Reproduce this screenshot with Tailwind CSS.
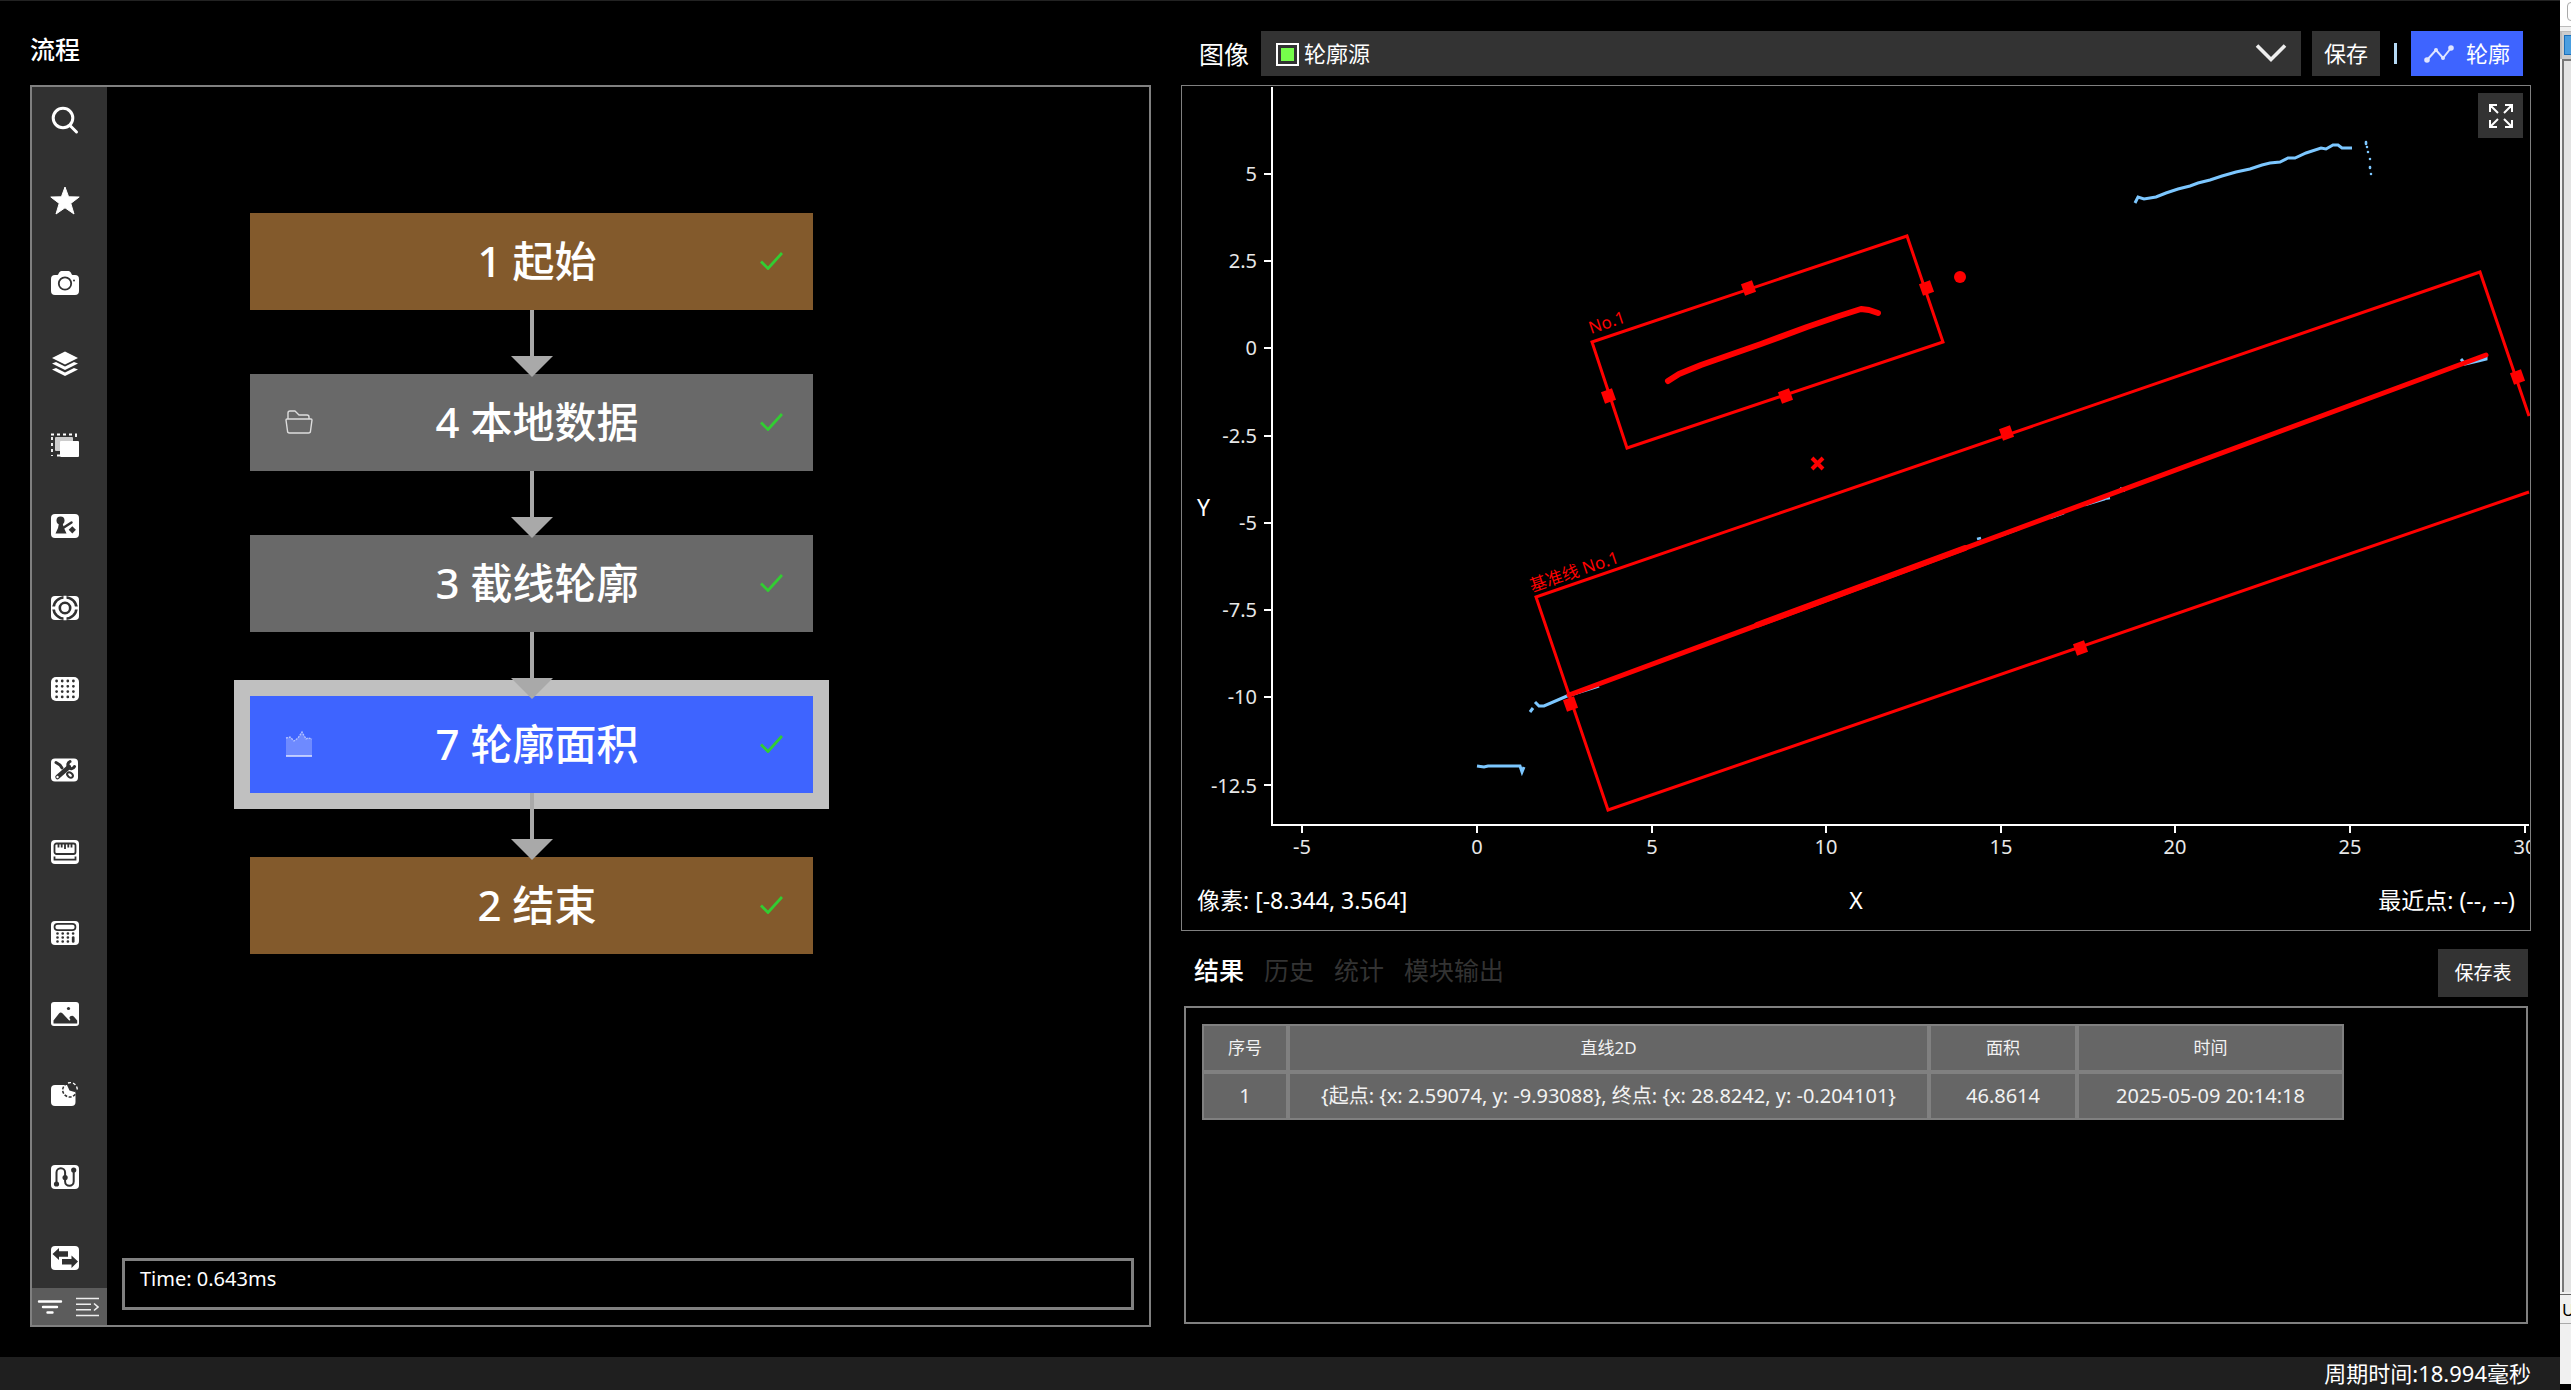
<!DOCTYPE html>
<html lang="zh-CN">
<head>
    <meta charset="UTF-8">
    <meta name="viewport" content="width=device-width, initial-scale=1.0">
    <title>流程</title>
    <script src="https://cdn.jsdelivr.net/npm/@tailwindcss/browser@4"></script>
    <style>
        body {
            font-family: 'Noto Sans', 'Noto Sans CJK SC', sans-serif;
        }
    </style>
</head>
<body class="flex min-h-screen overflow-x-hidden bg-black text-white">

    <div class="flex min-w-0 flex-1 flex-col border-t border-[#222]">
        <main class="grid flex-1 grid-cols-[1121fr_1350fr] gap-[30px] pt-[30px] pr-[29px] pl-[30px]">

            <!-- Flow -->
            <section class="flex flex-col pb-[30px]">
                <h1 class="mb-[18px] text-[25px] leading-9 font-medium">流程</h1>
                <div class="flex flex-1 border-2 border-[#808080]">

                    <!-- Tool categories -->
                    <nav class="flex w-[75px] flex-col bg-[#313131]" aria-label="工具">
                        <div class="flex flex-1 flex-col justify-between pt-[18px] pb-[15px] pl-[18px]">
                            <button class="size-[30px]" aria-label="搜索">
                                <svg viewBox="0 0 30 30" fill="none" stroke="#fff" stroke-width="3" stroke-linecap="round"><circle cx="13" cy="13" r="9.8"/><path d="M20 20.500l6.500 6.500"/></svg>
                            </button>
                            <button class="size-[30px]" aria-label="收藏">
                                <svg viewBox="0 0 30 30" fill="#fff" stroke="#fff" stroke-linejoin="round"><path d="M15 1l3.600 9.800 10.600.2-8.400 6.400 3.200 10.600-9-6.200-9 6.200 3.200-10.600L.8 11l10.600-.2z"/></svg>
                            </button>
                            <button class="size-[30px]" aria-label="相机">
                                <svg viewBox="0 0 30 30"><path fill="#fff" d="M5 7h2.500c1 0 1.500-4 4-4h7c2.500 0 3 4 4 4H25a4 4 0 0 1 4 4v12a4 4 0 0 1-4 4H5a4 4 0 0 1-4-4V11a4 4 0 0 1 4-4z"/><circle cx="15" cy="15.500" r="6.200" fill="none" stroke="#313131" stroke-width="1.800"/><circle cx="24" cy="12.500" r="1" fill="#313131"/></svg>
                            </button>
                            <button class="size-[30px]" aria-label="图层">
                                <svg viewBox="0 0 30 30" fill="#fff"><path d="M15 2.500l13 6.500-13 6.500L2 9z"/><path d="M2 14.500l4-1.500 9 4.500 9-4.500 4 1.500-13 6.500z"/><path d="M2 20.500l4-1.500 9 4.500 9-4.500 4 1.500-13 6.500z"/></svg>
                            </button>
                            <button class="size-[30px]" aria-label="区域">
                                <svg viewBox="0 0 30 30"><path fill="none" stroke="#fff" stroke-width="1.800" stroke-dasharray="3 3" d="M1 4.500h26M2 7v19M7 25.500h5M26 4v6"/><rect x="5" y="7" width="18" height="14" rx="1" fill="#ccc"/><rect x="10" y="11" width="19" height="16" rx="1" fill="#fff"/></svg>
                            </button>
                            <button class="size-[30px]" aria-label="定位">
                                <svg viewBox="0 0 30 30"><rect x="1" y="3" width="28" height="24" rx="4" fill="#fff"/><g fill="#313131"><circle cx="10.500" cy="9.500" r="4"/><path d="M9 12h3.500l1.500 5 2.500 5.500H5.500L8 17z"/><path d="M22.300 15.200l3.600 3.600-3.600 3.600-3.600-3.600z"/></g><path d="M13 17l8.500-5.500" stroke="#313131" stroke-width="2.500" stroke-linecap="round"/></svg>
                            </button>
                            <button class="size-[30px]" aria-label="目标">
                                <svg viewBox="0 0 30 30"><rect x="1" y="3" width="28" height="24" rx="4" fill="#fff"/><ellipse cx="15" cy="15" rx="11.500" ry="10.800" fill="none" stroke="#313131" stroke-width="2.600"/><path d="M15 2.800v6M15 21.200v6M1.500 15h7M21.500 15h7" stroke="#fff" stroke-width="3"/><circle cx="15" cy="15" r="5.200" fill="none" stroke="#313131" stroke-width="2.600"/></svg>
                            </button>
                            <button class="size-[30px]" aria-label="点阵">
                                <svg viewBox="0 0 30 30"><rect x="1" y="3" width="28" height="24" rx="5" fill="#fff"/><path fill="none" stroke="#313131" stroke-width="2.800" stroke-linecap="round" stroke-dasharray="0 5.600" d="M6.600 7h18M6.600 12.300h18M6.600 17.600h18M6.600 22.900h18"/></svg>
                            </button>
                            <button class="size-[30px]" aria-label="工具箱">
                                <svg viewBox="0 0 30 30"><rect x="1" y="3.500" width="27" height="23" rx="4" fill="#fff"/><g fill="none" stroke="#313131" stroke-linecap="round"><path d="M7.500 22L19 12" stroke-width="4.500"/><path d="M20 6.500c-3 1.500-3 6 .5 7 1.500.4 3 0 4-2" stroke-width="3"/><path d="M6 7.500l4 2.500 2 3" stroke-width="3"/><ellipse cx="20" cy="20" rx="3.200" ry="2.200" transform="rotate(40 20 20)" stroke-width="2"/></g><circle cx="7.500" cy="22" r="1.200" fill="#fff"/></svg>
                            </button>
                            <button class="size-[30px]" aria-label="测量">
                                <svg viewBox="0 0 30 30"><rect x="1" y="3" width="28" height="24" rx="4" fill="#fff"/><g fill="none" stroke="#313131" stroke-width="1.800"><rect x="4.500" y="6.500" width="21" height="10.500" rx="2"/><path d="M8.500 7v3.500M11.700 7v3.500M15 7v5M18.300 7v3.500M21.500 7v3.500"/><path d="M4.500 19.500v3.200h21v-3.200"/></g></svg>
                            </button>
                            <button class="size-[30px]" aria-label="计算">
                                <svg viewBox="0 0 30 30"><rect x="1" y="3" width="28" height="24" rx="4" fill="#fff"/><g fill="none" stroke="#313131"><rect x="4.500" y="5.800" width="21" height="6.400" rx="3.200" stroke-width="1.700"/><path d="M7.500 15.500h18M7.500 19.500h12M7.500 23.500h12" stroke-width="2.700" stroke-linecap="round" stroke-dasharray="0 5.200"/><path d="M23.200 19.500v4" stroke-width="2.700" stroke-linecap="round"/></g></svg>
                            </button>
                            <button class="size-[30px]" aria-label="图像">
                                <svg viewBox="0 0 30 30"><rect x="1" y="3" width="28" height="24" rx="3" fill="#fff"/><path fill="#313131" d="M3.500 24.500v-3l5.500-7c1-1.300 2.300-1.300 3.400-.2l6.600 7c1 .6 1.800-.2 1-1.300l-.6-1c.3-2 3-3 4.600-1.300l3.200 3.800v3z"/><circle cx="18.500" cy="9.500" r="1.600" fill="#313131"/></svg>
                            </button>
                            <button class="size-[30px]" aria-label="统计">
                                <svg viewBox="0 0 30 30"><rect x="1" y="5" width="24.500" height="21" rx="4" fill="#fff"/><path fill="#313131" d="M19.500 10.500L16.500 4 20 2.500h7.500V11l-3 1z"/><circle cx="19.700" cy="10" r="7" fill="none" stroke="#313131" stroke-width="1.500" stroke-dasharray="3 1.500"/><path fill="none" stroke="#fff" stroke-width="1.400" stroke-dasharray="3 2" d="M18 3a7 7 0 0 1 9 8.500"/></svg>
                            </button>
                            <button class="size-[30px]" aria-label="路径">
                                <svg viewBox="0 0 30 30"><rect x="1" y="3" width="28" height="24" rx="4" fill="#fff"/><path fill="none" stroke="#313131" stroke-width="2" d="M6.500 22V10.500a4.300 4.300 0 0 1 8.600 0v9a4.300 4.300 0 0 0 8.600 0V8"/><g fill="#313131"><circle cx="6.500" cy="22" r="2.600"/><circle cx="15.100" cy="15.500" r="2.600"/><circle cx="23.700" cy="8" r="2.600"/></g></svg>
                            </button>
                            <button class="size-[30px]" aria-label="转换">
                                <svg viewBox="0 0 30 30"><rect x="1" y="3" width="28" height="24" rx="4" fill="#fff"/><path fill="#313131" d="M2.500 11L9 5v3.200h9v5.600H9V17zM28 18.500L21.500 25v-3.500H12V16h9.500v-3.500z"/></svg>
                            </button>
                        </div>
                        <div class="flex h-[37px] items-center justify-between bg-[#5c5c5c] pr-2 pl-[5px]">
                            <button aria-label="筛选"><svg class="h-[18px] w-[26px]" viewBox="0 0 26 18" stroke="#fff" stroke-width="2.400" stroke-linecap="round"><path d="M2 3.500h22M6 9h14M10.500 14.500h5"/></svg></button>
                            <button aria-label="展开"><svg class="h-5 w-6" viewBox="0 0 24 20" fill="none" stroke="#eee" stroke-width="1.600"><path d="M1 1.500h23M1 7.300h15M1 12.800h15M1 18.500h23M19 6.500l4 3.500-4 3.500"/></svg></button>
                        </div>
                    </nav>

                    <!-- Flow canvas -->
                    <div class="flex min-w-0 flex-1 flex-col">
                        <ol class="flex w-[706px] flex-col pt-[126px] pl-[143px]">
                            <li class="flex h-[97px] items-center bg-[#835a2c] pr-[30px] pb-0.5 pl-[34px]">
                                <span class="w-[30px]"></span>
                                <span class="flex-1 text-center text-[42px] leading-[60px] font-medium">1 起始</span>
                                <svg class="h-[18px] w-[23px]" viewBox="0 0 23 18" fill="none" stroke="#32cd32" stroke-width="2.800"><path d="M1 9.500l7 7L22 1"/></svg>
                            </li>
                            <li class="relative z-10 flex h-16 justify-center" aria-hidden="true">
                                <svg class="h-[67px] w-[42px] shrink-0" viewBox="0 0 42 67" fill="#a9a9a9"><path d="M19 0h4v47h-4zM0 46h42L21 67z"/></svg>
                            </li>
                            <li class="flex h-[97px] items-center bg-[#696969] pr-[30px] pb-0.5 pl-[34px]">
                                <svg class="h-[30px] w-[30px]" viewBox="0 0 30 30" fill="none" stroke="#ddd" stroke-width="1.400" stroke-linejoin="round"><path d="M4 12V6a2 2 0 0 1 2-2h5l4 4h8a2 2 0 0 1 2 2v2"/><path d="M3 12h24a1 1 0 0 1 1 1l-1.500 11a2 2 0 0 1-2 2h-19a2 2 0 0 1-2-2L2 13a1 1 0 0 1 1-1z"/></svg>
                                <span class="flex-1 text-center text-[42px] leading-[60px] font-medium">4 本地数据</span>
                                <svg class="h-[18px] w-[23px]" viewBox="0 0 23 18" fill="none" stroke="#32cd32" stroke-width="2.800"><path d="M1 9.500l7 7L22 1"/></svg>
                            </li>
                            <li class="relative z-10 flex h-16 justify-center" aria-hidden="true">
                                <svg class="h-[67px] w-[42px] shrink-0" viewBox="0 0 42 67" fill="#a9a9a9"><path d="M19 0h4v47h-4zM0 46h42L21 67z"/></svg>
                            </li>
                            <li class="flex h-[97px] items-center bg-[#696969] pr-[30px] pb-0.5 pl-[34px]">
                                <span class="w-[30px]"></span>
                                <span class="flex-1 text-center text-[42px] leading-[60px] font-medium">3 截线轮廓</span>
                                <svg class="h-[18px] w-[23px]" viewBox="0 0 23 18" fill="none" stroke="#32cd32" stroke-width="2.800"><path d="M1 9.500l7 7L22 1"/></svg>
                            </li>
                            <li class="relative z-10 flex h-16 justify-center" aria-hidden="true">
                                <svg class="h-[67px] w-[42px] shrink-0" viewBox="0 0 42 67" fill="#a9a9a9"><path d="M19 0h4v47h-4zM0 46h42L21 67z"/></svg>
                            </li>
                            <!-- selected step -->
                            <li class="flex h-[97px] items-center bg-[#3e64ff] pr-[30px] pb-0.5 pl-[34px] ring-16 ring-[#c0c0c0]">
                                <svg class="h-[30px] w-[30px]" viewBox="0 0 30 30"><path fill="#6e8aff" d="M2 27V9l4-1 4 4 4-3 4-6 4 7 2-1 4 1v17z"/><path fill="none" stroke="#b4c3ff" stroke-width="1.300" stroke-dasharray="2 1" d="M2 9l4-1 4 4 4-3 4-6 4 7 2-1 4 1"/><path stroke="#dfe5ff" stroke-width="1.500" d="M2 27h26"/></svg>
                                <span class="flex-1 text-center text-[42px] leading-[60px] font-medium">7 轮廓面积</span>
                                <svg class="h-[18px] w-[23px]" viewBox="0 0 23 18" fill="none" stroke="#32cd32" stroke-width="2.800"><path d="M1 9.500l7 7L22 1"/></svg>
                            </li>
                            <li class="relative z-10 flex h-16 justify-center" aria-hidden="true">
                                <svg class="h-[67px] w-[42px] shrink-0" viewBox="0 0 42 67" fill="#a9a9a9"><path d="M19 0h4v47h-4zM0 46h42L21 67z"/></svg>
                            </li>
                            <li class="flex h-[97px] items-center bg-[#835a2c] pr-[30px] pb-0.5 pl-[34px]">
                                <span class="w-[30px]"></span>
                                <span class="flex-1 text-center text-[42px] leading-[60px] font-medium">2 结束</span>
                                <svg class="h-[18px] w-[23px]" viewBox="0 0 23 18" fill="none" stroke="#32cd32" stroke-width="2.800"><path d="M1 9.500l7 7L22 1"/></svg>
                            </li>
                        </ol>
                        <p class="mx-[15px] mt-auto mb-[15px] h-[52px] border-[3px] border-[#808080] px-[15px] pt-[6px] text-[20px] leading-6">Time: 0.643ms</p>
                    </div>
                </div>
            </section>

            <!-- Image and results -->
            <section class="flex min-w-0 flex-col pb-[33px]">
                <div class="mr-2 mb-[9px] flex h-[45px] items-stretch pl-[18px]">
                    <label for="source" class="mr-3 self-center text-[25px] leading-9">图像</label>
                    <div class="relative flex-1">
                        <select id="source" class="size-full appearance-none bg-[#333] pl-[43px] text-[22px]">
                            <option>轮廓源</option>
                        </select>
                        <svg class="pointer-events-none absolute top-3 left-[15px] size-[23px]" viewBox="0 0 23 23"><rect x="1" y="1" width="21" height="21" fill="none" stroke="#fff" stroke-width="2"/><rect x="5" y="5" width="13" height="13" fill="#76ff4b"/></svg>
                        <svg class="pointer-events-none absolute top-3 right-[14px] h-5 w-8" viewBox="0 0 32 20" fill="none" stroke="#eee" stroke-width="3.600"><path d="M2 2.500l14 14 14-14"/></svg>
                    </div>
                    <button class="ml-[11px] w-[68px] bg-[#333] text-[22px]">保存</button>
                    <span class="mx-[14px] h-[21px] w-[3px] self-center bg-[#b5d9f5]"></span>
                    <button class="flex w-[112px] items-center justify-between bg-[#3e64ff] px-[13px] text-[22px]">
                        <svg class="h-[18px] w-[30px]" viewBox="0 0 30 18" fill="#dfe5ff" stroke="#dfe5ff" stroke-width="2"><path fill="none" d="M3 15l9-10 7 8 8-10"/><circle cx="3" cy="15" r="1.800"/><circle cx="12" cy="5" r="1"/><circle cx="19" cy="13" r="1"/><circle cx="27" cy="3" r="1.800"/></svg>
                        轮廓
                    </button>
                </div>

                <!-- Profile chart -->
                <div class="relative border border-[#808080]">
                    <button class="absolute top-[7px] right-[7px] flex size-[45px] items-center justify-center bg-[#333]" aria-label="全屏">
                        <svg class="size-6" viewBox="0 0 24 24" fill="none" stroke="#fff" stroke-width="2"><path d="M1 8V1h7M1 1l8 8M16 1h7v7M23 1l-8 8M1 16v7h7M1 23l8-8M23 16v7h-7M23 23l-8-8"/></svg>
                    </button>
                    <svg class="block w-full" viewBox="1182 86 1348 844" role="img" aria-label="轮廓">
                        <!-- axes -->
                        <g fill="none" stroke="#fff" stroke-width="2">
                            <path d="M1272 87v738h1257"/>
                            <path d="M1264 174h8M1264 261h8M1264 348h8M1264 436h8M1264 523h8M1264 610h8M1264 697h8M1264 785h8"/>
                            <path d="M1302 825v8M1477 825v8M1652 825v8M1826 825v8M2001 825v8M2175 825v8M2350 825v8M2525 825v8"/>
                        </g>
                        <g fill="#e8e8e8" font-size="20" text-anchor="end">
                            <text x="1257" y="181">5</text>
                            <text x="1257" y="268">2.5</text>
                            <text x="1257" y="355">0</text>
                            <text x="1257" y="443">-2.5</text>
                            <text x="1257" y="530">-5</text>
                            <text x="1257" y="617">-7.5</text>
                            <text x="1257" y="704">-10</text>
                            <text x="1257" y="793">-12.5</text>
                        </g>
                        <g fill="#e8e8e8" font-size="20" text-anchor="middle">
                            <text x="1302" y="854">-5</text>
                            <text x="1477" y="854">0</text>
                            <text x="1652" y="854">5</text>
                            <text x="1826" y="854">10</text>
                            <text x="2001" y="854">15</text>
                            <text x="2175" y="854">20</text>
                            <text x="2350" y="854">25</text>
                            <text x="2525" y="854">30</text>
                        </g>
                        <g fill="#fff" font-size="23">
                            <text x="1197" y="516">Y</text>
                            <text x="1197" y="909">像素: [-8.344, 3.564]</text>
                            <text x="1856" y="909" text-anchor="middle">X</text>
                            <text x="2515" y="909" text-anchor="end">最近点: (--, --)</text>
                        </g>

                        <!-- measured profile -->
                        <g fill="none" stroke="#7cc7ff" stroke-width="3">
                            <path d="M2135 203L2138 197L2144 199L2156 197L2166 193L2178 189L2190 186L2198 183L2210 180L2222 176L2236 172L2250 169L2262 165L2270 163L2280 162L2288 158L2295 158L2306 153L2321 148L2326 149L2333 145L2338 145L2342 148L2352 148"/>
                            <path stroke-linecap="round" stroke-width="2.600" d="M2366 142v2M2367 147h0M2368 152h0M2370 159h0M2370 167v1M2371 174h0"/>
                            <path d="M1530 712l3-4M1535 702l4 4h5l23-10 32-10"/>
                            <path d="M1477 766l7 1 4-1h32l2 6 2-5"/>
                            <path d="M2461 359l4 5 13-3 8-2v-3"/>
                            <path stroke-width="2.600" d="M1977 539l4-1M1997 537l22-8M2050 518l14-5M2085 505l20-6M2103 499l7-1M2120 488l5 3"/>
                        </g>

                        <!-- result lines -->
                        <g fill="none" stroke="#f00" stroke-linecap="round">
                            <path stroke-width="6" stroke-linejoin="round" d="M1668 381l11-7 22-9 60-21 46-17 32-11 22-7 8 1 9 3"/>
                            <path stroke-width="5" d="M1569 695L2486 355"/>
                            <path stroke-width="6" d="M1757 625L1965 548"/>
                        </g>

                        <!-- measuring regions -->
                        <g fill="none" stroke="#f00" stroke-width="3">
                            <path d="M1592 342L1907 236L1943 342L1627 448z"/>
                            <path d="M2529 416L2480 272L1536 597L1608 810L2529 492"/>
                            <path stroke-width="4" d="M1812 458l11 11M1823 458l-11 11"/>
                        </g>
                        <circle cx="1960" cy="277" r="6" fill="#f00"/>
                        <g fill="none" stroke="#f00" stroke-width="12">
                            <path d="M1743 290l11-4M1603 398l11-4M1780 398l11-4M1921 290l11-4"/>
                            <path d="M2001 435l11-4M2512 379l11-4M1565 706l11-4M2075 650l11-4"/>
                        </g>
                        <g fill="#f00" font-size="17">
                            <text transform="translate(1591 334) rotate(-18.600)">No.1</text>
                            <text transform="translate(1532 592) rotate(-18.600)">基准线 No.1</text>
                        </g>
                    </svg>
                </div>

                <!-- Results -->
                <div class="mt-[18px] mr-[3px] mb-[9px] flex items-stretch justify-between pl-[13px]">
                    <div class="flex gap-5 text-[25px] leading-[42px] text-[#333]" role="tablist">
                        <button class="h-[42px] font-medium text-white" role="tab" aria-selected="true">结果</button>
                        <button class="h-[42px]" role="tab">历史</button>
                        <button class="h-[42px]" role="tab">统计</button>
                        <button class="h-[42px]" role="tab">模块输出</button>
                    </div>
                    <button class="h-12 w-[90px] bg-[#333] text-[19px]">保存表</button>
                </div>
                <div class="mr-[3px] ml-[3px] flex-1 border-2 border-[#808080] p-4">
                    <table class="w-[1142px] table-fixed border-separate border-spacing-0 text-center text-[20px] leading-6 text-[#f2f2f2]">
                        <thead>
                            <tr class="h-12 bg-[#666] text-[17px]">
                                <th class="w-[86px] border-2 border-[#808080] font-normal">序号</th>
                                <th class="w-[641px] border-2 border-[#808080] font-normal">直线2D</th>
                                <th class="w-[148px] border-2 border-[#808080] font-normal">面积</th>
                                <th class="w-[267px] border-2 border-[#808080] font-normal">时间</th>
                            </tr>
                        </thead>
                        <tbody>
                            <tr class="h-12 bg-[#666]">
                                <td class="border-2 border-[#808080]">1</td>
                                <td class="border-2 border-[#808080]">{起点: {x: 2.59074, y: -9.93088}, 终点: {x: 28.8242, y: -0.204101}</td>
                                <td class="border-2 border-[#808080]">46.8614</td>
                                <td class="border-2 border-[#808080]">2025-05-09 20:14:18</td>
                            </tr>
                        </tbody>
                    </table>
                </div>
            </section>
        </main>

        <footer class="h-[33px] bg-[#1f1f1f] pr-[29px] text-right text-[22px] leading-8">周期时间:18.994毫秒</footer>
    </div>

    <!-- Edge of the window behind -->
    <aside class="flex w-[11px] flex-col overflow-hidden bg-[#f0f0f0] text-black">
        <div class="h-[27px] border-b border-[#bbb] bg-white pt-0.5 pl-[7px]">
            <div class="h-[19px] w-4 rounded-sm border border-[#aaa]"></div>
        </div>
        <div class="mt-1 h-7 border-t border-l-2 border-[#bbb] bg-[#ccc] pt-[3px] pl-0.5">
            <div class="h-5 w-4 border border-[#1c6fb8] bg-[#4a9ee0]"></div>
        </div>
        <div class="ml-0.5 flex-1 border-t-2 border-l-2 border-[#777] bg-[#e3e3e3]"></div>
        <div class="mt-0.5 h-[30px] border-y border-[#aaa] border-t-[#666] pl-0.5 text-[17px] leading-[30px]">U</div>
        <div class="h-[60px]"></div>
        <div class="h-[6px] bg-black"></div>
    </aside>
</body>
</html>
